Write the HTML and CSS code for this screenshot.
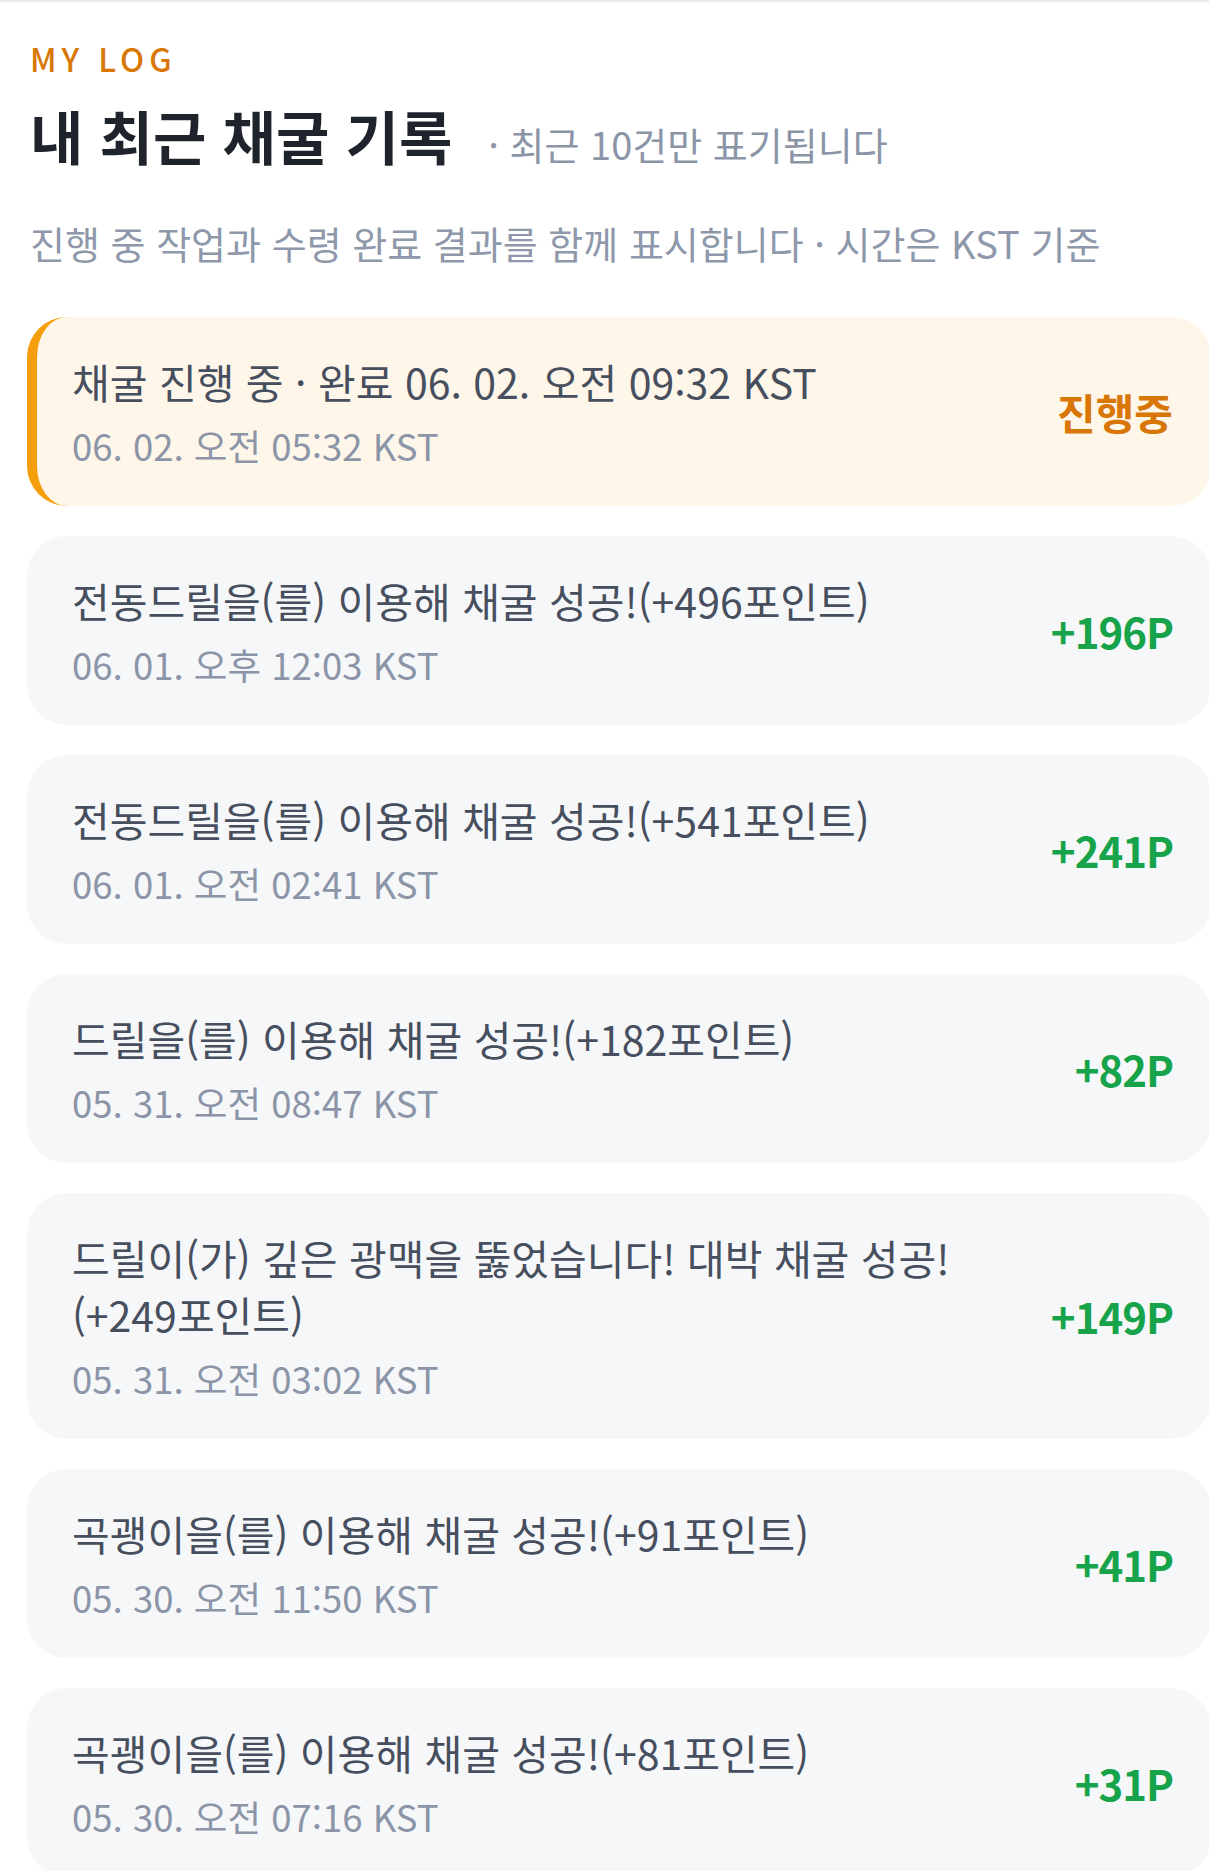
FILE: index.html
```html
<!DOCTYPE html>
<html lang="ko">
<head>
<meta charset="utf-8">
<title>내 최근 채굴 기록</title>
<link rel="stylesheet" href="styles.css">
</head>
<body>
<main class="page">
  <header class="head">
    <div class="eyebrow">MY LOG</div>
    <div class="title-row">
      <h1 class="title">내 최근 채굴 기록</h1>
      <span class="note">· 최근 10건만 표기됩니다</span>
    </div>
    <p class="desc">진행 중 작업과 수령 완료 결과를 함께 표시합니다 · 시간은 KST 기준</p>
  </header>

  <ul class="logs">
    <li class="log log-active">
      <div class="log-text">
        <div class="log-title">채굴 진행 중 · 완료 06. 02. 오전 09:32 KST</div>
        <div class="log-date">06. 02. 오전 05:32 KST</div>
      </div>
      <div class="log-value value-pending">진행중</div>
    </li>
    <li class="log">
      <div class="log-text">
        <div class="log-title">전동드릴을(를) 이용해 채굴 성공!(+496포인트)</div>
        <div class="log-date">06. 01. 오후 12:03 KST</div>
      </div>
      <div class="log-value value-plus">+196P</div>
    </li>
    <li class="log">
      <div class="log-text">
        <div class="log-title">전동드릴을(를) 이용해 채굴 성공!(+541포인트)</div>
        <div class="log-date">06. 01. 오전 02:41 KST</div>
      </div>
      <div class="log-value value-plus">+241P</div>
    </li>
    <li class="log">
      <div class="log-text">
        <div class="log-title">드릴을(를) 이용해 채굴 성공!(+182포인트)</div>
        <div class="log-date">05. 31. 오전 08:47 KST</div>
      </div>
      <div class="log-value value-plus">+82P</div>
    </li>
    <li class="log">
      <div class="log-text">
        <div class="log-title">드릴이(가) 깊은 광맥을 뚫었습니다! 대박 채굴 성공!(+249포인트)</div>
        <div class="log-date">05. 31. 오전 03:02 KST</div>
      </div>
      <div class="log-value value-plus">+149P</div>
    </li>
    <li class="log">
      <div class="log-text">
        <div class="log-title">곡괭이을(를) 이용해 채굴 성공!(+91포인트)</div>
        <div class="log-date">05. 30. 오전 11:50 KST</div>
      </div>
      <div class="log-value value-plus">+41P</div>
    </li>
    <li class="log">
      <div class="log-text">
        <div class="log-title">곡괭이을(를) 이용해 채굴 성공!(+81포인트)</div>
        <div class="log-date">05. 30. 오전 07:16 KST</div>
      </div>
      <div class="log-value value-plus">+31P</div>
    </li>
  </ul>
</main>
</body>
</html>
```

FILE: styles.css
```css
html {
  overflow-x: hidden;
}

body {
  margin: 0;
  background: #ffffff;
  border-top: 2px solid #e8eaee;
  font-family: "Noto Sans CJK KR", "Noto Sans", sans-serif;
  overflow-x: hidden;
}

.page {
  width: 1184px;
  margin-left: 27px;
  padding-top: 36px;
}

.head {
  padding-left: 3px;
}

.eyebrow {
  font-size: 32px;
  line-height: 40px;
  font-weight: 500;
  letter-spacing: 5px;
  color: #d97706;
}

.title-row {
  display: flex;
  align-items: baseline;
  gap: 36px;
  margin-top: 20px;
  height: 74px;
}

.title {
  margin: 0;
  font-size: 58px;
  line-height: 74px;
  font-weight: 700;
  color: #1f242c;
}

.note {
  font-size: 38px;
  line-height: 50px;
  color: #8b95a7;
}

.desc {
  margin: 46px 0 0;
  font-size: 38px;
  line-height: 50px;
  color: #8e98aa;
}

.logs {
  list-style: none;
  margin: 49px 0 0;
  padding: 0;
  display: flex;
  flex-direction: column;
  gap: 30px;
}

.log {
  display: flex;
  align-items: center;
  gap: 40px;
  padding: 36px 38px 36px 35px;
  border-left: 10px solid transparent;
  border-radius: 40px;
  background: #f6f7f9;
}

.log-active {
  border-left-color: #f59e0b;
  background: #fff6ea;
}

.log-text {
  flex: 1;
  min-width: 0;
}

.log-title {
  font-size: 41px;
  line-height: 57px;
  color: #474f5e;
}

.log-date {
  margin-top: 12px;
  font-size: 36.5px;
  line-height: 48px;
  color: #8b95a7;
}

.log-value {
  flex: none;
  font-size: 42px;
  line-height: 56px;
  font-weight: 700;
  letter-spacing: -1px;
}

.value-pending {
  font-size: 42px;
  letter-spacing: 0;
  color: #d97706;
}

.value-plus {
  color: #16a34a;
}
```
